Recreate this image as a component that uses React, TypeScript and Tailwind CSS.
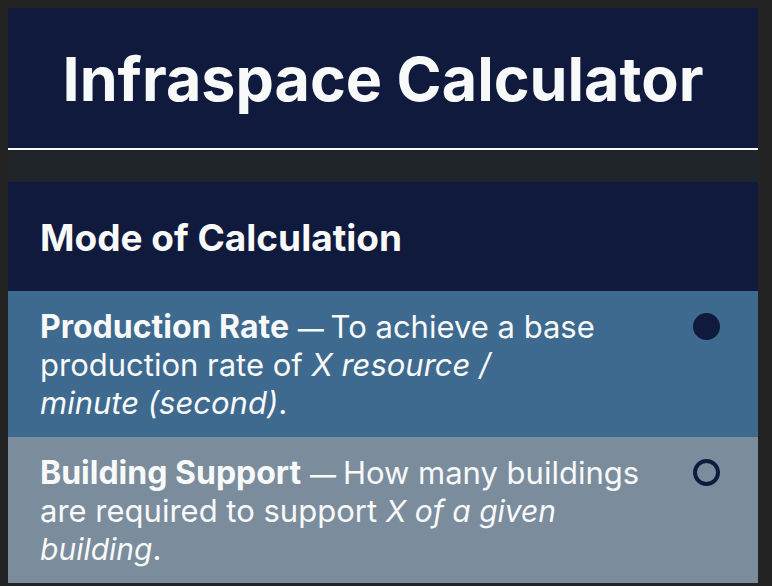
import { useState } from "react";
import type { ReactNode } from "react";

type Mode = "rate" | "support";

const options: { id: Mode; label: string; row: string; body: ReactNode }[] = [
  {
    id: "rate",
    label: "Production Rate",
    row: "bg-[#3f6a8f]",
    body: (
      <>
        To achieve a base production rate of <em>X resource / minute&nbsp;(second)</em>.
      </>
    ),
  },
  {
    id: "support",
    label: "Building Support",
    row: "bg-[#7b8d9d]",
    body: (
      <>
        How many buildings are required to support <em className="text-[30px] leading-8">X of a given building</em>.
      </>
    ),
  },
];

export default function App() {
  const [mode, setMode] = useState<Mode>("rate");

  return (
    <div className="min-h-screen bg-[#232324] pt-2 pr-[14px] pb-[3px] pl-2 font-['Inter',sans-serif] text-[#f8f9f9]">
      <main className="bg-[#1f2528]">
        <header className="border-b-2 border-[#f8f9f9] bg-[#101a3d] px-8 pt-[33px] pb-[31px]">
          <h1 className="text-center text-[61px] leading-[76px] font-bold">Infraspace Calculator</h1>
        </header>

        <fieldset className="mt-8">
          <legend className="w-full bg-[#101a3d] px-8 pt-[33px] pb-[31px] text-[37px] leading-[45px] font-bold">
            Mode of Calculation
          </legend>
          {options.map((option) => (
            <label
              key={option.id}
              htmlFor={option.id}
              className={`flex cursor-pointer items-start justify-between gap-8 pt-[17px] pr-[38px] pb-[15px] pl-8 text-[31px] leading-[38px] ${option.row}`}
            >
              <span className="min-w-0 flex-1">
                <strong className="text-[32px] leading-8 font-bold">{option.label}</strong>{" "}
                <span className="text-[26px] leading-8 font-medium">— </span>
                {option.body}
              </span>
              <input
                id={option.id}
                type="radio"
                name="mode"
                checked={mode === option.id}
                onChange={() => setMode(option.id)}
                className="mt-[5px] size-[27px] shrink-0 appearance-none rounded-full border-4 border-[#101a3d] checked:bg-[#101a3d]"
              />
            </label>
          ))}
        </fieldset>
      </main>
    </div>
  );
}
